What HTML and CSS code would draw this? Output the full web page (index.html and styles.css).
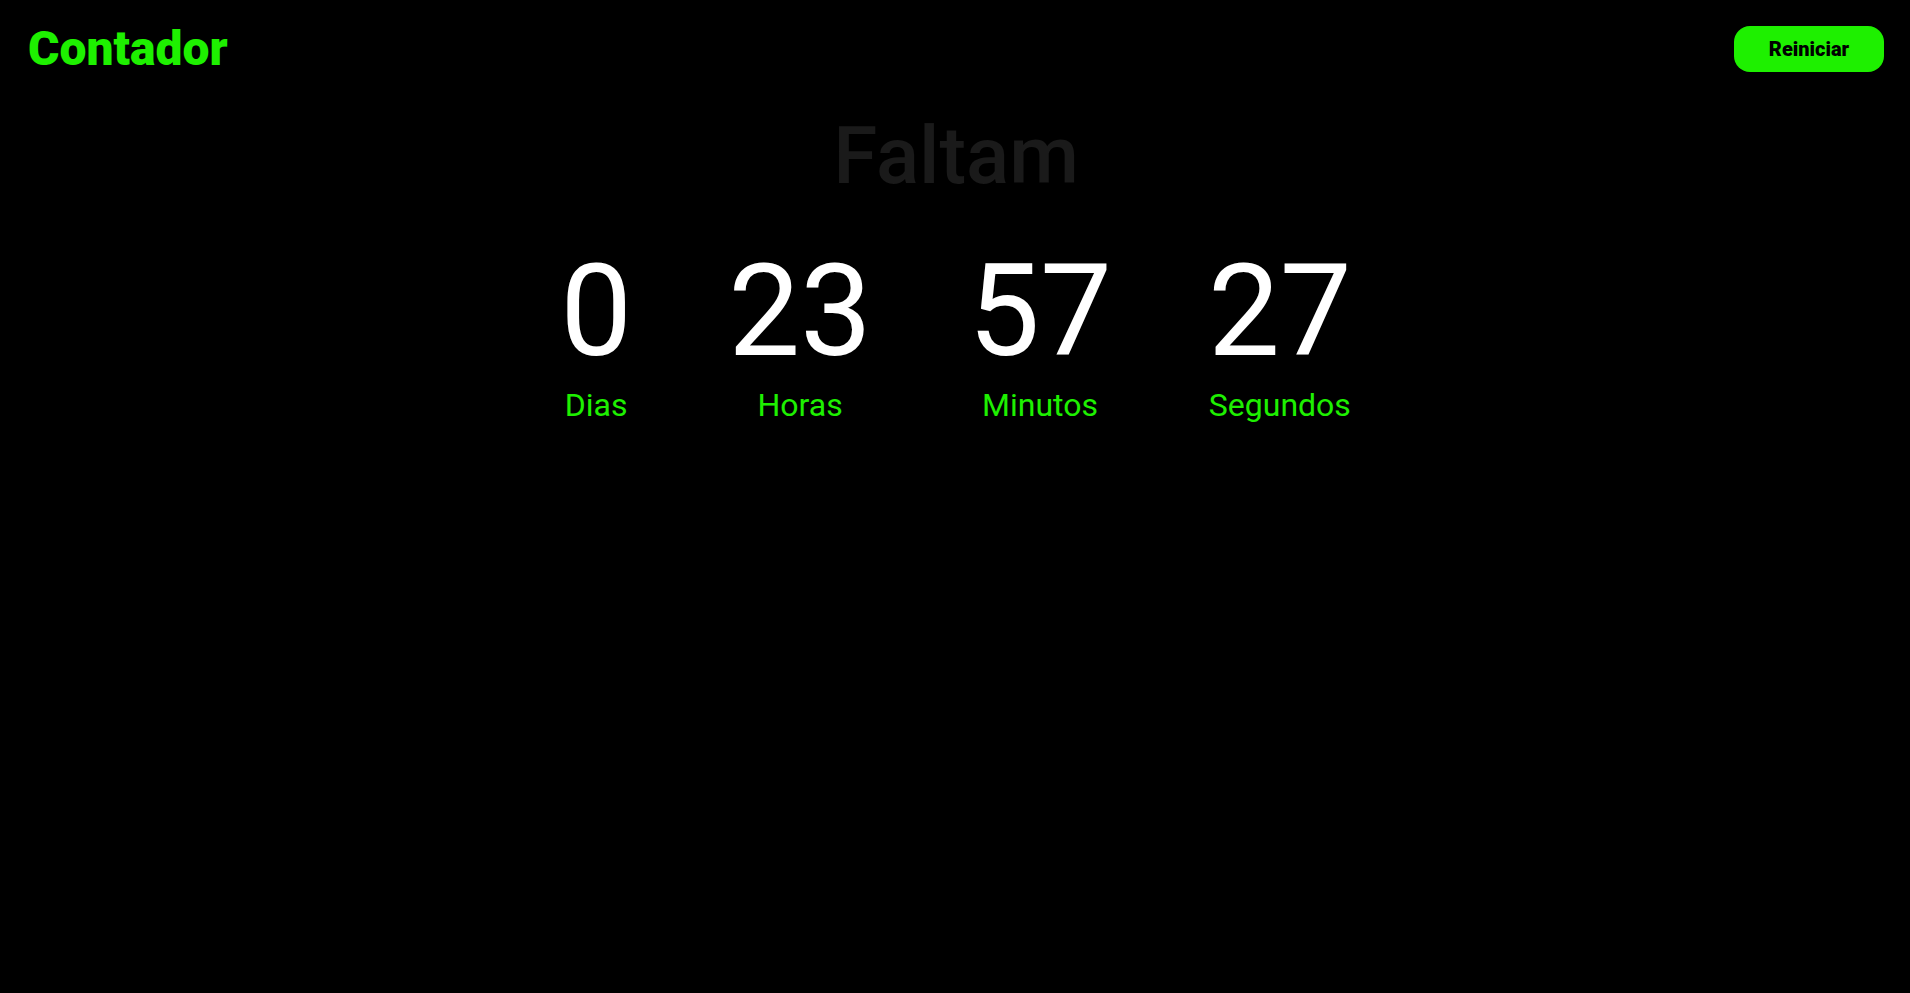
FILE: index.html
```html
<!DOCTYPE html>
<html lang="pt">
<head>
<meta charset="utf-8">
<title>Contador</title>
<link rel="stylesheet" href="styles.css">
</head>
<body>
<header class="header">
  <h1 class="logo">Contador</h1>
  <button class="btn" type="button">Reiniciar</button>
</header>
<main class="main">
  <h2 class="title">Faltam</h2>
  <div class="counter">
    <div class="unit"><span class="num">0</span><span class="label">Dias</span></div>
    <div class="unit"><span class="num">23</span><span class="label">Horas</span></div>
    <div class="unit"><span class="num">57</span><span class="label">Minutos</span></div>
    <div class="unit"><span class="num">27</span><span class="label">Segundos</span></div>
  </div>
</main>
</body>
</html>
```
FILE: styles.css
```css
* { box-sizing: border-box; }
html, body { margin: 0; padding: 0; }
body {
  background: #000;
  color: #fff;
  font-family: Roboto, "Liberation Sans", sans-serif;
  min-height: 100vh;
}
.header {
  display: flex;
  align-items: center;
  justify-content: space-between;
  padding: 20px 26px 20px 28px;
}
.logo {
  margin: 0;
  font-size: 48px;
  font-weight: 900;
  color: #1ef000;
  letter-spacing: 0;
  line-height: normal;
}
.btn {
  font-family: Roboto, "Liberation Sans", sans-serif;
  font-size: 20px;
  font-weight: 900;
  color: #000;
  background: #1ef000;
  border: none;
  border-radius: 16px;
  width: 150px;
  height: 46px;
  padding: 0;
  line-height: 46px;
}
.main {
  display: flex;
  flex-direction: column;
  align-items: center;
  padding-top: 12px;
  padding-left: 2px;
}
.title {
  margin: 0;
  font-size: 80px;
  font-weight: 500;
  color: #1a1a1a;
  line-height: normal;
}
.counter {
  display: flex;
  gap: 96px;
  margin-top: 33px;
}
.unit {
  display: flex;
  flex-direction: column;
  align-items: center;
}
.num {
  font-size: 128px;
  font-weight: 400;
  line-height: normal;
  color: #fff;
}
.label {
  font-size: 32px;
  font-weight: 400;
  color: #1ef000;
  line-height: normal;
}
```
